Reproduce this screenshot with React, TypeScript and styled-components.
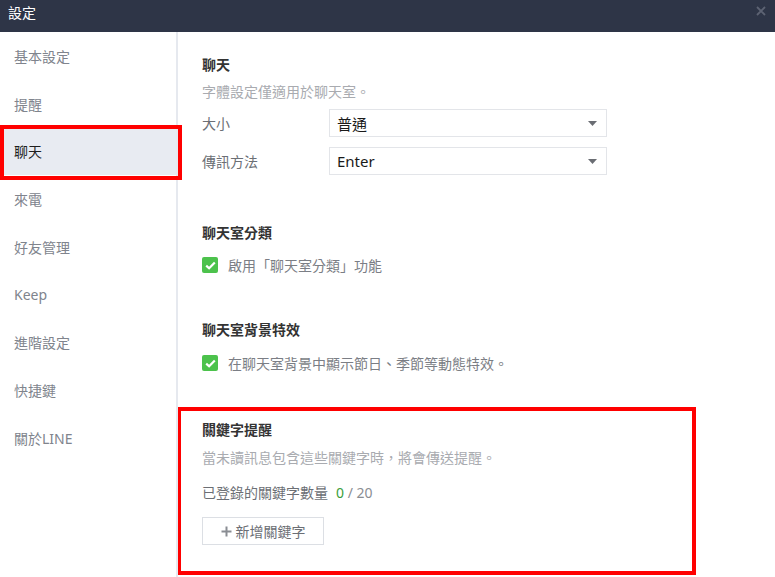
import React from "react";
import styled, { createGlobalStyle } from "styled-components";

const Global = createGlobalStyle`
  html, body { margin: 0; padding: 0; background: #fff; }
  body { font-family: "Noto Sans", "Noto Sans CJK TC", sans-serif; }
  * { box-sizing: border-box; }
`;

const Window = styled.div`
  width: 775px;
  height: 577px;
  display: flex;
  flex-direction: column;
  overflow: hidden;
  background: #fff;
`;

const TitleBar = styled.div`
  height: 32px;
  flex: 0 0 32px;
  background: #2e3547;
  display: flex;
  align-items: center;
  justify-content: space-between;
  padding: 0 9px 0 8px;
  color: #fff;
  font-size: 14px;
  font-family: "Noto Sans CJK TC", sans-serif;
`;

const Title = styled.span`
  line-height: 20px;
  margin-top: -8px;
`;

const CloseBtn = styled.span`
  display: flex;
  margin-top: -10px;
`;

const Body = styled.div`
  flex: 1;
  display: flex;
`;

const Sidebar = styled.nav`
  width: 178px;
  flex: 0 0 178px;
  border-right: 2px solid #e6e9ef;
  display: flex;
  flex-direction: column;
  position: relative;
  z-index: 1;
`;

const NavItem = styled.div<{ $active?: boolean }>`
  height: 47.75px;
  display: flex;
  align-items: center;
  padding-left: 14px;
  font-size: 14px;
  color: ${(p) => (p.$active ? "#1e1e1e" : "#80848d")};
  background: ${(p) => (p.$active ? "#e8ebf2" : "transparent")};
  position: relative;
  ${(p) =>
    p.$active &&
    `
    &::after {
      content: "";
      position: absolute;
      left: 0;
      top: -2.5px;
      right: -6px;
      bottom: -5px;
      border: 4.5px solid #ff0000;
      pointer-events: none;
    }
  `}
`;

const Content = styled.main`
  flex: 1;
  padding-top: 23px;
  display: flex;
  flex-direction: column;
`;

const Section = styled.section<{ $gap: number; $highlight?: boolean }>`
  padding: 0 24px;
  margin-top: ${(p) => p.$gap}px;
  display: flex;
  flex-direction: column;
  position: relative;
  ${(p) =>
    p.$highlight &&
    `
    &::after {
      content: "";
      position: absolute;
      left: -1px;
      top: -13px;
      right: 79px;
      bottom: -30px;
      border: 4.5px solid #ff0000;
      pointer-events: none;
    }
  `}
`;

const Heading = styled.h3`
  margin: 0;
  font-size: 14px;
  line-height: 20px;
  font-weight: 700;
  color: #333;
`;

const Desc = styled.p<{ $mt: number }>`
  margin: ${(p) => p.$mt}px 0 0;
  font-size: 14px;
  line-height: 20px;
  color: #a9abb0;
`;

const FieldRow = styled.div<{ $mt: number }>`
  margin-top: ${(p) => p.$mt}px;
  display: flex;
  align-items: center;
  height: 28px;
`;

const FieldLabel = styled.span`
  width: 127px;
  font-size: 14px;
  color: #6c6f75;
`;

const Select = styled.div`
  width: 278px;
  height: 28px;
  border: 1px solid #e3e5e9;
  display: flex;
  align-items: center;
  justify-content: space-between;
  padding: 0 9px 0 7px;
  font-size: 15px;
  color: #1a1a1a;
`;

const CheckRow = styled.label<{ $mt: number }>`
  margin-top: ${(p) => p.$mt}px;
  display: flex;
  align-items: center;
  gap: 10px;
  height: 20px;
  font-size: 14px;
  color: #7b7e85;
`;

const CheckBox = styled.span`
  width: 16px;
  height: 16px;
  border-radius: 2px;
  background: #4cc24c;
  display: flex;
  align-items: center;
  justify-content: center;
`;

const CountLine = styled.div<{ $mt: number }>`
  margin-top: ${(p) => p.$mt}px;
  font-size: 14px;
  line-height: 20px;
  color: #6c6f75;
`;

const Count = styled.span`
  margin-left: 8px;
  color: #3a9e3a;
`;

const Total = styled.span`
  color: #8a8d93;
`;

const AddButton = styled.button`
  margin-top: 14px;
  width: 122px;
  height: 28px;
  border: 1px solid #dcdfe4;
  background: #fff;
  display: flex;
  align-items: center;
  justify-content: center;
  gap: 4px;
  padding: 0;
  font-family: inherit;
  font-size: 14px;
  color: #6c6f75;
`;

const Arrow = () => (
  <svg width="9" height="5" viewBox="0 0 9 5">
    <path d="M0 0H9L4.5 5Z" fill="#6a6d73" />
  </svg>
);

const Check = () => (
  <svg width="11" height="9" viewBox="0 0 11 9">
    <path d="M1.2 4.6L4.1 7.3L9.8 1.4" stroke="#fff" strokeWidth="2.2" fill="none" />
  </svg>
);

const navItems = ["基本設定", "提醒", "聊天", "來電", "好友管理", "Keep", "進階設定", "快捷鍵", "關於LINE"];

export default function App() {
  return (
    <>
      <Global />
      <Window>
        <TitleBar>
          <Title>設定</Title>
          <CloseBtn>
            <svg width="10" height="10" viewBox="0 0 10 10">
              <path d="M1 1L9 9M9 1L1 9" stroke="#5d6373" strokeWidth="1.8" />
            </svg>
          </CloseBtn>
        </TitleBar>
        <Body>
          <Sidebar>
            {navItems.map((n) => (
              <NavItem key={n} $active={n === "聊天"}>
                {n}
              </NavItem>
            ))}
          </Sidebar>
          <Content>
            <Section $gap={0}>
              <Heading>聊天</Heading>
              <Desc $mt={7}>字體設定僅適用於聊天室。</Desc>
              <FieldRow $mt={7}>
                <FieldLabel>大小</FieldLabel>
                <Select>
                  <span>普通</span>
                  <Arrow />
                </Select>
              </FieldRow>
              <FieldRow $mt={10}>
                <FieldLabel>傳訊方法</FieldLabel>
                <Select>
                  <span>Enter</span>
                  <Arrow />
                </Select>
              </FieldRow>
            </Section>
            <Section $gap={48}>
              <Heading>聊天室分類</Heading>
              <CheckRow $mt={12}>
                <CheckBox>
                  <Check />
                </CheckBox>
                啟用「聊天室分類」功能
              </CheckRow>
            </Section>
            <Section $gap={45}>
              <Heading>聊天室背景特效</Heading>
              <CheckRow $mt={13}>
                <CheckBox>
                  <Check />
                </CheckBox>
                在聊天室背景中顯示節日、季節等動態特效。
              </CheckRow>
            </Section>
            <Section $gap={47} $highlight>
              <Heading>關鍵字提醒</Heading>
              <Desc $mt={8}>當未讀訊息包含這些關鍵字時，將會傳送提醒。</Desc>
              <CountLine $mt={15}>
                已登錄的關鍵字數量
                <Count>0</Count>
                <Total> / 20</Total>
              </CountLine>
              <AddButton>
                <svg width="11" height="11" viewBox="0 0 11 11">
                  <path d="M5.5 0.5V10.5M0.5 5.5H10.5" stroke="#8a8d93" strokeWidth="2" />
                </svg>
                新增關鍵字
              </AddButton>
            </Section>
          </Content>
        </Body>
      </Window>
    </>
  );
}
